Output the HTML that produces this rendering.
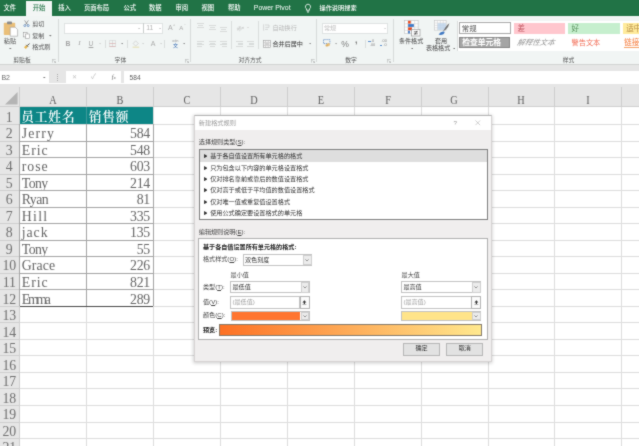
<!DOCTYPE html>
<html><head><meta charset="utf-8"><title>Excel</title>
<style>
html,body{margin:0;padding:0;background:#fff}
body{width:639px;height:446px;overflow:hidden;position:relative;font-family:'Liberation Sans','Noto Sans CJK SC',sans-serif}
#app{position:absolute;left:0;top:0;width:639px;height:446px;overflow:hidden}
#app div,#app span,#app svg{position:absolute;display:block}
#app span{white-space:nowrap}
#app u{text-decoration:underline;text-underline-offset:0.5px;text-decoration-thickness:0.5px}
#in{left:0;top:0;width:639px;height:446px;overflow:hidden;background:#fff;filter:url(#soft)}
</style></head><body>
<svg width="0" height="0" style="position:absolute"><filter id="soft" x="0" y="0" width="100%" height="100%" color-interpolation-filters="sRGB"><feConvolveMatrix order="3" kernelMatrix="1 3 1 3 20 3 1 3 1" divisor="36" edgeMode="duplicate" preserveAlpha="true"/></filter></svg>
<div id="app"><div id="in">
<div style="left:-6.00px;top:-6.00px;width:651.00px;height:21.60px;background:#217346"></div>
<div style="left:26.40px;top:1.20px;width:25.40px;height:14.60px;background:#f3f6f5"></div>
<span style="left:-90.20px;width:200px;text-align:center;top:4.29px;font-size:6.3px;line-height:8.82px;color:#fff;font-weight:500">文件</span>
<span style="left:-61.00px;width:200px;text-align:center;top:4.29px;font-size:6.3px;line-height:8.82px;color:#217346;font-weight:500">开始</span>
<span style="left:-35.50px;width:200px;text-align:center;top:4.29px;font-size:6.3px;line-height:8.82px;color:#fff;font-weight:500">插入</span>
<span style="left:-3.50px;width:200px;text-align:center;top:4.29px;font-size:6.3px;line-height:8.82px;color:#fff;font-weight:500">页面布局</span>
<span style="left:29.80px;width:200px;text-align:center;top:4.29px;font-size:6.3px;line-height:8.82px;color:#fff;font-weight:500">公式</span>
<span style="left:55.30px;width:200px;text-align:center;top:4.29px;font-size:6.3px;line-height:8.82px;color:#fff;font-weight:500">数据</span>
<span style="left:81.80px;width:200px;text-align:center;top:4.29px;font-size:6.3px;line-height:8.82px;color:#fff;font-weight:500">审阅</span>
<span style="left:107.80px;width:200px;text-align:center;top:4.29px;font-size:6.3px;line-height:8.82px;color:#fff;font-weight:500">视图</span>
<span style="left:134.30px;width:200px;text-align:center;top:4.29px;font-size:6.3px;line-height:8.82px;color:#fff;font-weight:500">帮助</span>
<span style="left:172.20px;width:200px;text-align:center;top:3.37px;font-size:6.9px;line-height:9.66px;color:#fff;font-weight:500">Power Pivot</span>
<svg style="left:304px;top:2.5px" width="8" height="11" viewBox="0 0 8 11"><path d="M4 1.2a2.6 2.6 0 0 0-1.5 4.7v1.3h3V5.9A2.6 2.6 0 0 0 4 1.2z" fill="none" stroke="#fff" stroke-width="0.8"/><path d="M2.8 8.2h2.4M3.1 9.2h1.8" stroke="#fff" stroke-width="0.7"/></svg>
<span style="left:319.50px;top:4.36px;font-size:6.2px;line-height:8.68px;color:#fff;font-weight:500">操作说明搜索</span>
<div style="left:-6.00px;top:15.60px;width:651.00px;height:49.00px;background:#f1f5f4"></div>
<div style="left:-6.00px;top:64.50px;width:651.00px;height:6.30px;background:#e6e6e6"></div>
<div style="left:-6.00px;top:64.20px;width:651.00px;height:0.70px;background:#d2d4d3"></div>
<div style="left:58.15px;top:19.00px;width:0.70px;height:43.00px;background:#d6dad9"></div>
<div style="left:189.95px;top:19.00px;width:0.70px;height:43.00px;background:#d6dad9"></div>
<div style="left:316.05px;top:19.00px;width:0.70px;height:43.00px;background:#d6dad9"></div>
<div style="left:393.45px;top:19.00px;width:0.70px;height:43.00px;background:#d6dad9"></div>
<div style="left:231.00px;top:21.00px;width:0.60px;height:28.00px;background:#dadedd"></div>
<div style="left:258.00px;top:21.00px;width:0.60px;height:28.00px;background:#dadedd"></div>
<div style="left:104.70px;top:39.50px;width:0.60px;height:8.50px;background:#dadedd"></div>
<div style="left:127.20px;top:39.50px;width:0.60px;height:8.50px;background:#dadedd"></div>
<div style="left:164.30px;top:39.50px;width:0.60px;height:8.50px;background:#dadedd"></div>
<div style="left:364.50px;top:39.50px;width:0.60px;height:8.50px;background:#dadedd"></div>
<span style="left:-78.00px;width:200px;text-align:center;top:55.84px;font-size:5.8px;line-height:8.12px;color:#555;">剪贴板</span>
<span style="left:20.40px;width:200px;text-align:center;top:55.84px;font-size:5.8px;line-height:8.12px;color:#555;">字体</span>
<span style="left:150.00px;width:200px;text-align:center;top:55.84px;font-size:5.8px;line-height:8.12px;color:#555;">对齐方式</span>
<span style="left:251.00px;width:200px;text-align:center;top:55.84px;font-size:5.8px;line-height:8.12px;color:#555;">数字</span>
<span style="left:468.50px;width:200px;text-align:center;top:55.84px;font-size:5.8px;line-height:8.12px;color:#555;">样式</span>
<svg style="left:52.2px;top:58.6px" width="4" height="4" viewBox="0 0 4 4"><path d="M0.3 0.3H0.3V3.7M0.3 0.3H3.7M1.6 1.6L3.5 3.5M3.6 2.2V3.6H2.2" fill="none" stroke="#999" stroke-width="0.5"/></svg>
<svg style="left:184.7px;top:58.6px" width="4" height="4" viewBox="0 0 4 4"><path d="M0.3 0.3H0.3V3.7M0.3 0.3H3.7M1.6 1.6L3.5 3.5M3.6 2.2V3.6H2.2" fill="none" stroke="#999" stroke-width="0.5"/></svg>
<svg style="left:311.0px;top:58.6px" width="4" height="4" viewBox="0 0 4 4"><path d="M0.3 0.3H0.3V3.7M0.3 0.3H3.7M1.6 1.6L3.5 3.5M3.6 2.2V3.6H2.2" fill="none" stroke="#999" stroke-width="0.5"/></svg>
<svg style="left:387.3px;top:58.6px" width="4" height="4" viewBox="0 0 4 4"><path d="M0.3 0.3H0.3V3.7M0.3 0.3H3.7M1.6 1.6L3.5 3.5M3.6 2.2V3.6H2.2" fill="none" stroke="#999" stroke-width="0.5"/></svg>
<svg style="left:3px;top:20.5px" width="16" height="16" viewBox="0 0 16 16"><rect x="0.8" y="1.8" width="11.4" height="12.2" rx="0.8" fill="#eabf78"/><rect x="4" y="0.6" width="5" height="2.6" rx="0.8" fill="#8a8a8a"/><path d="M7.2 6.2h5l2.4 2.4v6.6H7.2z" fill="#fff" stroke="#9a9a9a" stroke-width="0.6"/></svg>
<span style="left:-90.10px;width:200px;text-align:center;top:36.93px;font-size:6.1px;line-height:8.54px;color:#555;">粘贴</span>
<svg style="left:9.40px;top:47.95px" width="2.6" height="1.50" viewBox="0 0 4 2.2"><path d="M0 0h4L2 2.2z" fill="#777"/></svg>
<svg style="left:23.2px;top:20px" width="7" height="7" viewBox="0 0 7 7"><path d="M1.6 0.4L4.6 4.8M5.4 0.4L2.4 4.8" stroke="#666" stroke-width="0.6" fill="none"/><circle cx="1.8" cy="5.6" r="1" fill="none" stroke="#3b6fb5" stroke-width="0.6"/><circle cx="5.2" cy="5.6" r="1" fill="none" stroke="#3b6fb5" stroke-width="0.6"/></svg>
<svg style="left:23.2px;top:32.2px" width="7" height="7" viewBox="0 0 7 7"><rect x="0.5" y="0.5" width="3.6" height="4.4" fill="#fff" stroke="#888" stroke-width="0.5"/><rect x="2.6" y="2" width="3.8" height="4.5" fill="#fff" stroke="#888" stroke-width="0.5"/></svg>
<svg style="left:23px;top:43.4px" width="8" height="7" viewBox="0 0 8 7"><path d="M4.2 2.6L6.6 0.6" stroke="#555" stroke-width="1"/><path d="M1 4.2L3.4 2l1.6 1.6L2.8 6z" fill="#e8b54d"/><path d="M3.2 1.8l2 2" stroke="#555" stroke-width="0.8"/></svg>
<span style="left:32.20px;top:19.63px;font-size:6.1px;line-height:8.54px;color:#555;">剪切</span>
<span style="left:32.20px;top:31.53px;font-size:6.1px;line-height:8.54px;color:#555;">复制</span>
<span style="left:32.20px;top:42.83px;font-size:6.1px;line-height:8.54px;color:#555;">格式刷</span>
<svg style="left:49.30px;top:35.35px" width="2.6" height="1.50" viewBox="0 0 4 2.2"><path d="M0 0h4L2 2.2z" fill="#777"/></svg>
<div style="left:63.80px;top:22.80px;width:99.60px;height:10.80px;background:#fff;border:0.5px solid #dfe3e2;box-sizing:border-box"></div>
<div style="left:142.80px;top:23.00px;width:0.70px;height:10.40px;background:#c9cdcc"></div>
<svg style="left:138.40px;top:27.75px" width="2.2" height="1.30" viewBox="0 0 4 2.2"><path d="M0 0h4L2 2.2z" fill="#bbb"/></svg>
<svg style="left:159.10px;top:27.75px" width="2.2" height="1.30" viewBox="0 0 4 2.2"><path d="M0 0h4L2 2.2z" fill="#bbb"/></svg>
<span style="left:146.20px;top:23.44px;font-size:6.8px;line-height:9.52px;color:#b4b4b4;">11</span>
<span style="left:70.40px;width:200px;text-align:center;top:23.30px;font-size:7px;line-height:9.8px;color:#aaa;">A</span>
<span style="left:74.30px;width:200px;text-align:center;top:23.00px;font-size:4px;line-height:5.6px;color:#aaa;">^</span>
<span style="left:81.30px;width:200px;text-align:center;top:24.40px;font-size:6px;line-height:8.4px;color:#aaa;">A</span>
<span style="left:84.80px;width:200px;text-align:center;top:23.00px;font-size:4px;line-height:5.6px;color:#aaa;">ˇ</span>
<span style="left:-32.00px;width:200px;text-align:center;top:38.94px;font-size:6.8px;line-height:9.52px;color:#a4a4a4;font-weight:bold">B</span>
<span style="left:-20.60px;width:200px;text-align:center;top:38.80px;font-size:7px;line-height:9.8px;color:#a4a4a4;font-style:italic;font-family:'Liberation Serif',serif">I</span>
<span style="left:-9.00px;width:200px;text-align:center;top:38.88px;font-size:6.6px;line-height:9.24px;color:#a4a4a4;text-decoration:underline">U</span>
<svg style="left:98.90px;top:43.25px" width="2.2" height="1.30" viewBox="0 0 4 2.2"><path d="M0 0h4L2 2.2z" fill="#ccc"/></svg>
<svg style="left:109.4px;top:40.2px" width="7" height="7" viewBox="0 0 7 7"><path d="M0.4 0.4h6.2v6.2H0.4zM3.5 0.4v6.2" fill="none" stroke="#c9c9c9" stroke-width="0.5"/><path d="M0.4 3.5h6.2M0.4 6.6h6.2" stroke="#d9a3a3" stroke-width="0.6"/></svg>
<svg style="left:120.50px;top:43.20px" width="2.4" height="1.40" viewBox="0 0 4 2.2"><path d="M0 0h4L2 2.2z" fill="#888"/></svg>
<svg style="left:132px;top:39.8px" width="8" height="8" viewBox="0 0 8 8"><path d="M3.6 0.8L6.4 3.6 3.6 6 1.2 3.6z" fill="none" stroke="#c4c4c4" stroke-width="0.6"/><rect x="0.6" y="6.6" width="6.6" height="1.2" fill="#e6e2b8"/></svg>
<svg style="left:142.40px;top:43.25px" width="2.2" height="1.30" viewBox="0 0 4 2.2"><path d="M0 0h4L2 2.2z" fill="#ccc"/></svg>
<span style="left:53.20px;width:200px;text-align:center;top:38.60px;font-size:7px;line-height:9.8px;color:#aaa;">A</span>
<svg style="left:160.40px;top:43.25px" width="2.2" height="1.30" viewBox="0 0 4 2.2"><path d="M0 0h4L2 2.2z" fill="#ccc"/></svg>
<span style="left:75.40px;width:200px;text-align:center;top:38.82px;font-size:3.4px;line-height:4.76px;color:#999;">wén</span>
<span style="left:75.40px;width:200px;text-align:center;top:42.10px;font-size:5px;line-height:7.0px;color:#3b6fb5;">文</span>
<svg style="left:182.50px;top:43.20px" width="2.4" height="1.40" viewBox="0 0 4 2.2"><path d="M0 0h4L2 2.2z" fill="#888"/></svg>
<div style="left:197.10px;top:23.30px;width:7.20px;height:0.60px;background:#d8dbda"></div>
<div style="left:198.30px;top:24.90px;width:4.80px;height:0.60px;background:#d8dbda"></div>
<div style="left:197.10px;top:26.50px;width:7.20px;height:0.60px;background:#d8dbda"></div>
<div style="left:208.60px;top:25.30px;width:7.20px;height:0.60px;background:#d8dbda"></div>
<div style="left:209.80px;top:26.90px;width:4.80px;height:0.60px;background:#d8dbda"></div>
<div style="left:208.60px;top:28.50px;width:7.20px;height:0.60px;background:#d8dbda"></div>
<div style="left:219.80px;top:27.30px;width:7.20px;height:0.60px;background:#d8dbda"></div>
<div style="left:221.00px;top:28.90px;width:4.80px;height:0.60px;background:#d8dbda"></div>
<div style="left:219.80px;top:30.50px;width:7.20px;height:0.60px;background:#d8dbda"></div>
<div style="left:197.10px;top:40.90px;width:7.20px;height:0.60px;background:#d8dbda"></div>
<div style="left:197.10px;top:42.50px;width:5.00px;height:0.60px;background:#d8dbda"></div>
<div style="left:197.10px;top:44.10px;width:7.20px;height:0.60px;background:#d8dbda"></div>
<div style="left:197.10px;top:45.70px;width:5.00px;height:0.60px;background:#d8dbda"></div>
<div style="left:208.60px;top:40.90px;width:7.20px;height:0.60px;background:#d8dbda"></div>
<div style="left:209.70px;top:42.50px;width:5.00px;height:0.60px;background:#d8dbda"></div>
<div style="left:208.60px;top:44.10px;width:7.20px;height:0.60px;background:#d8dbda"></div>
<div style="left:209.70px;top:45.70px;width:5.00px;height:0.60px;background:#d8dbda"></div>
<div style="left:219.80px;top:40.90px;width:7.20px;height:0.60px;background:#d8dbda"></div>
<div style="left:222.00px;top:42.50px;width:5.00px;height:0.60px;background:#d8dbda"></div>
<div style="left:219.80px;top:44.10px;width:7.20px;height:0.60px;background:#d8dbda"></div>
<div style="left:222.00px;top:45.70px;width:5.00px;height:0.60px;background:#d8dbda"></div>
<svg style="left:235.5px;top:23.5px" width="10" height="8" viewBox="0 0 10 8"><text x="0.3" y="5.6" font-size="4.6" font-style="italic" fill="#bdbdbd" transform="rotate(-25 3 4)" font-family="Liberation Sans,sans-serif">ab</text><path d="M3 7.2L7.4 3.4M7.4 3.4L5.8 3.6M7.4 3.4L7.2 5" stroke="#bdbdbd" stroke-width="0.5" fill="none"/></svg>
<svg style="left:246.50px;top:27.10px" width="2" height="1.20" viewBox="0 0 4 2.2"><path d="M0 0h4L2 2.2z" fill="#ccc"/></svg>
<div style="left:235.80px;top:40.90px;width:7.20px;height:0.60px;background:#d8dbda"></div>
<div style="left:238.20px;top:42.50px;width:4.80px;height:0.60px;background:#d8dbda"></div>
<div style="left:238.20px;top:44.10px;width:4.80px;height:0.60px;background:#d8dbda"></div>
<div style="left:235.80px;top:45.70px;width:7.20px;height:0.60px;background:#d8dbda"></div>
<div style="left:247.00px;top:40.90px;width:7.20px;height:0.60px;background:#d8dbda"></div>
<div style="left:249.40px;top:42.50px;width:4.80px;height:0.60px;background:#d8dbda"></div>
<div style="left:249.40px;top:44.10px;width:4.80px;height:0.60px;background:#d8dbda"></div>
<div style="left:247.00px;top:45.70px;width:7.20px;height:0.60px;background:#d8dbda"></div>
<svg style="left:263px;top:24.3px" width="7" height="7" viewBox="0 0 7 7"><path d="M0.6 0.3v6.4M2 1h4v2.4H2.4M2 5.4h3" stroke="#c2c2c2" stroke-width="0.6" fill="none"/></svg>
<span style="left:272.40px;top:23.63px;font-size:6.1px;line-height:8.54px;color:#b8b8b8;">自动换行</span>
<svg style="left:262.6px;top:39.6px" width="8" height="8" viewBox="0 0 8 8"><rect x="0.4" y="0.4" width="7.2" height="7.2" fill="#fff" stroke="#9c9c9c" stroke-width="0.6"/><path d="M0.4 2.4h7.2M0.4 5.6h7.2M2.6 0.4v2M5.2 0.4v2M2.6 5.6v2M5.2 5.6v2" stroke="#a8a8a8" stroke-width="0.5"/><path d="M1.6 4h4.8" stroke="#444" stroke-width="0.5"/></svg>
<span style="left:272.40px;top:39.83px;font-size:6.1px;line-height:8.54px;color:#333;">合并后居中</span>
<svg style="left:308.50px;top:43.20px" width="2.4" height="1.40" viewBox="0 0 4 2.2"><path d="M0 0h4L2 2.2z" fill="#888"/></svg>
<div style="left:321.70px;top:22.80px;width:66.50px;height:10.80px;background:#fff;border:0.5px solid #dfe3e2;box-sizing:border-box"></div>
<span style="left:324.00px;top:23.93px;font-size:6.1px;line-height:8.54px;color:#c0c0c0;">常规</span>
<svg style="left:383.90px;top:27.75px" width="2.2" height="1.30" viewBox="0 0 4 2.2"><path d="M0 0h4L2 2.2z" fill="#ccc"/></svg>
<svg style="left:323px;top:39.4px" width="9" height="8" viewBox="0 0 9 8"><rect x="0.5" y="0.6" width="6.4" height="4" fill="none" stroke="#4a7bbd" stroke-width="0.7" stroke-dasharray="1.2 0.7"/><circle cx="5.4" cy="5.6" r="1.6" fill="#e9bf7a"/><circle cx="3.8" cy="6.4" r="1.2" fill="#dcae62"/></svg>
<svg style="left:334.90px;top:43.25px" width="2.2" height="1.30" viewBox="0 0 4 2.2"><path d="M0 0h4L2 2.2z" fill="#999"/></svg>
<span style="left:245.20px;width:200px;text-align:center;top:37.58px;font-size:8.6px;line-height:12.04px;color:#7a7a7a;">%</span>
<span style="left:256.20px;width:200px;text-align:center;top:34.30px;font-size:9px;line-height:12.6px;color:#777;font-weight:bold">,</span>
<span style="left:272.60px;width:200px;text-align:center;top:38.94px;font-size:3.8px;line-height:5.32px;color:#8a8a8a;">.0</span>
<span style="left:272.60px;width:200px;text-align:center;top:42.94px;font-size:3.8px;line-height:5.32px;color:#8a8a8a;">.00</span>
<div style="left:368.40px;top:41.20px;width:2.20px;height:0.80px;background:#5b8fd0"></div>
<span style="left:284.20px;width:200px;text-align:center;top:38.94px;font-size:3.8px;line-height:5.32px;color:#8a8a8a;">.00</span>
<span style="left:285.00px;width:200px;text-align:center;top:42.94px;font-size:3.8px;line-height:5.32px;color:#8a8a8a;">.0</span>
<div style="left:379.80px;top:45.20px;width:2.20px;height:0.80px;background:#5b8fd0"></div>
<svg style="left:403.6px;top:19.6px" width="17" height="17" viewBox="0 0 17 17"><rect x="0.5" y="0.5" width="13.6" height="13.2" fill="#fff" stroke="#b4b4b4" stroke-width="0.5"/><path d="M3.9 0.5v13.2M7.3 0.5v13.2M10.7 0.5v13.2M0.5 3.8h13.6M0.5 7.1h13.6M0.5 10.4h13.6" stroke="#c4c4c4" stroke-width="0.45"/><rect x="4.1" y="0.8" width="2.6" height="2.8" fill="#e8491f"/><rect x="4.1" y="4.1" width="5.8" height="2.8" fill="#3f79c6"/><rect x="4.1" y="7.4" width="3.8" height="2.8" fill="#e8491f"/><rect x="4.1" y="10.7" width="1.8" height="2.8" fill="#3f79c6"/><rect x="7.6" y="9.4" width="8.4" height="6.6" fill="#fff" stroke="#8a8a8a" stroke-width="0.6"/><path d="M9.8 11.8h4M9.8 13.8h4M13 10.8l-2.2 4" stroke="#333" stroke-width="0.65"/></svg>
<span style="left:311.10px;width:200px;text-align:center;top:36.93px;font-size:6.1px;line-height:8.54px;color:#444;">条件格式</span>
<svg style="left:410.60px;top:47.85px" width="2.6" height="1.50" viewBox="0 0 4 2.2"><path d="M0 0h4L2 2.2z" fill="#777"/></svg>
<svg style="left:434.4px;top:20px" width="16" height="16" viewBox="0 0 16 16"><rect x="0.5" y="0.5" width="11.6" height="9.6" fill="#fff" stroke="#b9b9b9" stroke-width="0.5"/><path d="M0.5 3h11.6M0.5 5.4h11.6M0.5 7.8h11.6M3.4 0.5v9.6M6.3 0.5v9.6M9.2 0.5v9.6" stroke="#c4c4c4" stroke-width="0.45"/><rect x="3.6" y="3.2" width="8.3" height="6.7" fill="#bcd2ea" opacity="0.8"/><path d="M15.4 3.2Q13.6 4 11.4 7.4L9 11.2l2.6-1.4Q14.6 7.4 15.4 3.2z" fill="#6e6e6e"/><path d="M4.6 14.6q2.2-3.6 5.6-3 1.2 1.2-0.8 2.6-2.6 1.2-4.8 0.4z" fill="#3f78c2"/></svg>
<span style="left:341.00px;width:200px;text-align:center;top:36.93px;font-size:6.1px;line-height:8.54px;color:#444;">套用</span>
<span style="left:338.10px;width:200px;text-align:center;top:44.13px;font-size:6.1px;line-height:8.54px;color:#444;">表格格式</span>
<svg style="left:452.60px;top:47.95px" width="2.6" height="1.50" viewBox="0 0 4 2.2"><path d="M0 0h4L2 2.2z" fill="#777"/></svg>
<div style="left:457.40px;top:20.60px;width:190.00px;height:30.20px;background:#fff;border-left:0.5px solid #d9dcdb;box-sizing:border-box"></div>
<div style="left:458.60px;top:21.70px;width:52.80px;height:12.60px;background:#fff;border:0.8px solid #a9a9a9;box-sizing:border-box"></div>
<span style="left:461.80px;top:23.92px;font-size:7.4px;line-height:10.36px;color:#505050;font-weight:400">常规</span>
<div style="left:459.40px;top:36.90px;width:51.00px;height:10.80px;background:#a5a5a5;border:0.7px solid #868686;box-sizing:border-box"></div>
<span style="left:462.20px;top:37.84px;font-size:7.8px;line-height:10.92px;color:#fff;font-weight:bold">检查单元格</span>
<div style="left:514.20px;top:22.90px;width:51.00px;height:10.70px;background:#ffc7ce"></div>
<span style="left:517.50px;top:23.85px;font-size:7.5px;line-height:10.5px;color:#bf525c;font-weight:400">差</span>
<div style="left:568.30px;top:22.90px;width:51.50px;height:10.70px;background:#c6efce"></div>
<span style="left:571.50px;top:23.85px;font-size:7.5px;line-height:10.5px;color:#57905a;font-weight:400">好</span>
<div style="left:623.00px;top:22.90px;width:20.00px;height:10.70px;background:#ffeb9c"></div>
<span style="left:626.20px;top:23.85px;font-size:7.5px;line-height:10.5px;color:#b58c46;font-weight:400">适中</span>
<span style="left:516.80px;top:37.75px;font-size:7.5px;line-height:10.5px;color:#979797;font-style:italic;transform:skewX(-12deg);transform-origin:left center">解释性文本</span>
<span style="left:571.50px;top:37.96px;font-size:7.2px;line-height:10.08px;color:#f26c55;font-weight:400">警告文本</span>
<span style="left:624.30px;top:37.75px;font-size:7.5px;line-height:10.5px;color:#f57a3a;white-space:nowrap">链接单元格</span>
<div style="left:624.30px;top:47.00px;width:20.00px;height:0.80px;background:#f5a26a"></div>
<div style="left:-6.00px;top:70.80px;width:55.00px;height:12.70px;background:#fff"></div>
<div style="left:66.00px;top:70.80px;width:579.00px;height:12.70px;background:#fff"></div>
<div style="left:49.00px;top:70.80px;width:17.00px;height:12.70px;background:#e6e6e6"></div>
<div style="left:57.00px;top:73.60px;width:0.70px;height:0.90px;background:#aaa"></div>
<div style="left:57.00px;top:75.60px;width:0.70px;height:0.90px;background:#aaa"></div>
<div style="left:57.00px;top:77.60px;width:0.70px;height:0.90px;background:#aaa"></div>
<div style="left:57.00px;top:79.60px;width:0.70px;height:0.90px;background:#aaa"></div>
<span style="left:1.40px;top:72.90px;font-size:7px;line-height:9.8px;color:#6a6a6a;">B2</span>
<svg style="left:43.40px;top:76.95px" width="2.6" height="1.50" viewBox="0 0 4 2.2"><path d="M0 0h4L2 2.2z" fill="#777"/></svg>
<span style="left:-25.20px;width:200px;text-align:center;top:73.06px;font-size:6.2px;line-height:8.68px;color:#c4c4c4;">✕</span>
<span style="left:-6.40px;width:200px;text-align:center;top:72.22px;font-size:7.4px;line-height:10.36px;color:#c4c4c4;">✓</span>
<span style="left:12.60px;width:200px;text-align:center;top:73.06px;font-size:6.2px;line-height:8.68px;color:#666;font-style:italic;font-family:'Liberation Serif',serif">f</span>
<span style="left:14.80px;width:200px;text-align:center;top:75.12px;font-size:4.4px;line-height:6.16px;color:#666;font-style:italic;font-family:'Liberation Serif',serif">x</span>
<div style="left:121.30px;top:70.80px;width:2.30px;height:12.70px;background:#e6e6e6"></div>
<span style="left:129.60px;top:72.78px;font-size:6.6px;line-height:9.24px;color:#5a5a5a;">584</span>
<div style="left:-6.00px;top:83.50px;width:651.00px;height:23.50px;background:#e6e6e6"></div>
<div style="left:-6.00px;top:106.30px;width:651.00px;height:0.80px;background:#cfcfcf"></div>
<div style="left:-6.00px;top:107.00px;width:25.60px;height:345.00px;background:#e6e6e6"></div>
<div style="left:19.00px;top:107.00px;width:0.70px;height:345.00px;background:#cfcfcf"></div>
<svg style="left:5px;top:92.2px" width="12.6" height="12.6" viewBox="0 0 10 10"><path d="M10 0V10H0z" fill="#b4b4b4"/></svg>
<div style="left:19.20px;top:86.50px;width:0.80px;height:20.50px;background:#cdcdcd"></div>
<div style="left:86.10px;top:86.50px;width:0.80px;height:20.50px;background:#cdcdcd"></div>
<div style="left:153.00px;top:86.50px;width:0.80px;height:20.50px;background:#cdcdcd"></div>
<div style="left:219.90px;top:86.50px;width:0.80px;height:20.50px;background:#cdcdcd"></div>
<div style="left:286.80px;top:86.50px;width:0.80px;height:20.50px;background:#cdcdcd"></div>
<div style="left:353.70px;top:86.50px;width:0.80px;height:20.50px;background:#cdcdcd"></div>
<div style="left:420.60px;top:86.50px;width:0.80px;height:20.50px;background:#cdcdcd"></div>
<div style="left:487.50px;top:86.50px;width:0.80px;height:20.50px;background:#cdcdcd"></div>
<div style="left:554.40px;top:86.50px;width:0.80px;height:20.50px;background:#cdcdcd"></div>
<div style="left:621.30px;top:86.50px;width:0.80px;height:20.50px;background:#cdcdcd"></div>
<span style="left:-46.95px;width:200px;text-align:center;top:91.70px;font-size:13.2px;line-height:16px;color:#606060;font-family:'Liberation Serif','Noto Serif CJK SC',serif;transform:scaleX(0.78)">A</span>
<span style="left:19.95px;width:200px;text-align:center;top:91.70px;font-size:13.2px;line-height:16px;color:#606060;font-family:'Liberation Serif','Noto Serif CJK SC',serif;transform:scaleX(0.78)">B</span>
<span style="left:86.85px;width:200px;text-align:center;top:91.70px;font-size:13.2px;line-height:16px;color:#606060;font-family:'Liberation Serif','Noto Serif CJK SC',serif;transform:scaleX(0.78)">C</span>
<span style="left:153.75px;width:200px;text-align:center;top:91.70px;font-size:13.2px;line-height:16px;color:#606060;font-family:'Liberation Serif','Noto Serif CJK SC',serif;transform:scaleX(0.78)">D</span>
<span style="left:220.65px;width:200px;text-align:center;top:91.70px;font-size:13.2px;line-height:16px;color:#606060;font-family:'Liberation Serif','Noto Serif CJK SC',serif;transform:scaleX(0.78)">E</span>
<span style="left:287.55px;width:200px;text-align:center;top:91.70px;font-size:13.2px;line-height:16px;color:#606060;font-family:'Liberation Serif','Noto Serif CJK SC',serif;transform:scaleX(0.78)">F</span>
<span style="left:354.45px;width:200px;text-align:center;top:91.70px;font-size:13.2px;line-height:16px;color:#606060;font-family:'Liberation Serif','Noto Serif CJK SC',serif;transform:scaleX(0.78)">G</span>
<span style="left:421.35px;width:200px;text-align:center;top:91.70px;font-size:13.2px;line-height:16px;color:#606060;font-family:'Liberation Serif','Noto Serif CJK SC',serif;transform:scaleX(0.78)">H</span>
<span style="left:488.25px;width:200px;text-align:center;top:91.70px;font-size:13.2px;line-height:16px;color:#606060;font-family:'Liberation Serif','Noto Serif CJK SC',serif;transform:scaleX(0.78)">I</span>
<div style="left:86.10px;top:107.00px;width:0.80px;height:345.00px;background:#dddddd"></div>
<div style="left:153.00px;top:107.00px;width:0.80px;height:345.00px;background:#dddddd"></div>
<div style="left:219.90px;top:107.00px;width:0.80px;height:345.00px;background:#dddddd"></div>
<div style="left:286.80px;top:107.00px;width:0.80px;height:345.00px;background:#dddddd"></div>
<div style="left:353.70px;top:107.00px;width:0.80px;height:345.00px;background:#dddddd"></div>
<div style="left:420.60px;top:107.00px;width:0.80px;height:345.00px;background:#dddddd"></div>
<div style="left:487.50px;top:107.00px;width:0.80px;height:345.00px;background:#dddddd"></div>
<div style="left:554.40px;top:107.00px;width:0.80px;height:345.00px;background:#dddddd"></div>
<div style="left:621.30px;top:107.00px;width:0.80px;height:345.00px;background:#dddddd"></div>
<div style="left:19.60px;top:124.00px;width:625.40px;height:0.80px;background:#dddddd"></div>
<div style="left:-6.00px;top:124.00px;width:25.60px;height:0.80px;background:#cfcfcf"></div>
<span style="left:-90.80px;width:200px;text-align:center;top:109.70px;font-size:13.8px;line-height:16px;color:#707070;font-family:'Liberation Serif','Noto Serif CJK SC',serif;letter-spacing:-0.23px">1</span>
<div style="left:19.60px;top:140.53px;width:625.40px;height:0.80px;background:#dddddd"></div>
<div style="left:-6.00px;top:140.53px;width:25.60px;height:0.80px;background:#cfcfcf"></div>
<span style="left:-90.80px;width:200px;text-align:center;top:126.23px;font-size:13.8px;line-height:16px;color:#707070;font-family:'Liberation Serif','Noto Serif CJK SC',serif;letter-spacing:-0.23px">2</span>
<div style="left:19.60px;top:157.06px;width:625.40px;height:0.80px;background:#dddddd"></div>
<div style="left:-6.00px;top:157.06px;width:25.60px;height:0.80px;background:#cfcfcf"></div>
<span style="left:-90.80px;width:200px;text-align:center;top:142.76px;font-size:13.8px;line-height:16px;color:#707070;font-family:'Liberation Serif','Noto Serif CJK SC',serif;letter-spacing:-0.23px">3</span>
<div style="left:19.60px;top:173.59px;width:625.40px;height:0.80px;background:#dddddd"></div>
<div style="left:-6.00px;top:173.59px;width:25.60px;height:0.80px;background:#cfcfcf"></div>
<span style="left:-90.80px;width:200px;text-align:center;top:159.29px;font-size:13.8px;line-height:16px;color:#707070;font-family:'Liberation Serif','Noto Serif CJK SC',serif;letter-spacing:-0.23px">4</span>
<div style="left:19.60px;top:190.12px;width:625.40px;height:0.80px;background:#dddddd"></div>
<div style="left:-6.00px;top:190.12px;width:25.60px;height:0.80px;background:#cfcfcf"></div>
<span style="left:-90.80px;width:200px;text-align:center;top:175.82px;font-size:13.8px;line-height:16px;color:#707070;font-family:'Liberation Serif','Noto Serif CJK SC',serif;letter-spacing:-0.23px">5</span>
<div style="left:19.60px;top:206.65px;width:625.40px;height:0.80px;background:#dddddd"></div>
<div style="left:-6.00px;top:206.65px;width:25.60px;height:0.80px;background:#cfcfcf"></div>
<span style="left:-90.80px;width:200px;text-align:center;top:192.35px;font-size:13.8px;line-height:16px;color:#707070;font-family:'Liberation Serif','Noto Serif CJK SC',serif;letter-spacing:-0.23px">6</span>
<div style="left:19.60px;top:223.18px;width:625.40px;height:0.80px;background:#dddddd"></div>
<div style="left:-6.00px;top:223.18px;width:25.60px;height:0.80px;background:#cfcfcf"></div>
<span style="left:-90.80px;width:200px;text-align:center;top:208.88px;font-size:13.8px;line-height:16px;color:#707070;font-family:'Liberation Serif','Noto Serif CJK SC',serif;letter-spacing:-0.23px">7</span>
<div style="left:19.60px;top:239.71px;width:625.40px;height:0.80px;background:#dddddd"></div>
<div style="left:-6.00px;top:239.71px;width:25.60px;height:0.80px;background:#cfcfcf"></div>
<span style="left:-90.80px;width:200px;text-align:center;top:225.41px;font-size:13.8px;line-height:16px;color:#707070;font-family:'Liberation Serif','Noto Serif CJK SC',serif;letter-spacing:-0.23px">8</span>
<div style="left:19.60px;top:256.24px;width:625.40px;height:0.80px;background:#dddddd"></div>
<div style="left:-6.00px;top:256.24px;width:25.60px;height:0.80px;background:#cfcfcf"></div>
<span style="left:-90.80px;width:200px;text-align:center;top:241.94px;font-size:13.8px;line-height:16px;color:#707070;font-family:'Liberation Serif','Noto Serif CJK SC',serif;letter-spacing:-0.23px">9</span>
<div style="left:19.60px;top:272.77px;width:625.40px;height:0.80px;background:#dddddd"></div>
<div style="left:-6.00px;top:272.77px;width:25.60px;height:0.80px;background:#cfcfcf"></div>
<span style="left:-90.80px;width:200px;text-align:center;top:258.47px;font-size:13.8px;line-height:16px;color:#707070;font-family:'Liberation Serif','Noto Serif CJK SC',serif;letter-spacing:-0.23px">10</span>
<div style="left:19.60px;top:289.30px;width:625.40px;height:0.80px;background:#dddddd"></div>
<div style="left:-6.00px;top:289.30px;width:25.60px;height:0.80px;background:#cfcfcf"></div>
<span style="left:-90.80px;width:200px;text-align:center;top:275.00px;font-size:13.8px;line-height:16px;color:#707070;font-family:'Liberation Serif','Noto Serif CJK SC',serif;letter-spacing:-0.23px">11</span>
<div style="left:19.60px;top:305.83px;width:625.40px;height:0.80px;background:#dddddd"></div>
<div style="left:-6.00px;top:305.83px;width:25.60px;height:0.80px;background:#cfcfcf"></div>
<span style="left:-90.80px;width:200px;text-align:center;top:291.53px;font-size:13.8px;line-height:16px;color:#707070;font-family:'Liberation Serif','Noto Serif CJK SC',serif;letter-spacing:-0.23px">12</span>
<div style="left:19.60px;top:322.36px;width:625.40px;height:0.80px;background:#dddddd"></div>
<div style="left:-6.00px;top:322.36px;width:25.60px;height:0.80px;background:#cfcfcf"></div>
<span style="left:-90.80px;width:200px;text-align:center;top:308.06px;font-size:13.8px;line-height:16px;color:#707070;font-family:'Liberation Serif','Noto Serif CJK SC',serif;letter-spacing:-0.23px">13</span>
<div style="left:19.60px;top:338.89px;width:625.40px;height:0.80px;background:#dddddd"></div>
<div style="left:-6.00px;top:338.89px;width:25.60px;height:0.80px;background:#cfcfcf"></div>
<span style="left:-90.80px;width:200px;text-align:center;top:324.59px;font-size:13.8px;line-height:16px;color:#707070;font-family:'Liberation Serif','Noto Serif CJK SC',serif;letter-spacing:-0.23px">14</span>
<div style="left:19.60px;top:355.42px;width:625.40px;height:0.80px;background:#dddddd"></div>
<div style="left:-6.00px;top:355.42px;width:25.60px;height:0.80px;background:#cfcfcf"></div>
<span style="left:-90.80px;width:200px;text-align:center;top:341.12px;font-size:13.8px;line-height:16px;color:#707070;font-family:'Liberation Serif','Noto Serif CJK SC',serif;letter-spacing:-0.23px">15</span>
<div style="left:19.60px;top:371.95px;width:625.40px;height:0.80px;background:#dddddd"></div>
<div style="left:-6.00px;top:371.95px;width:25.60px;height:0.80px;background:#cfcfcf"></div>
<span style="left:-90.80px;width:200px;text-align:center;top:357.65px;font-size:13.8px;line-height:16px;color:#707070;font-family:'Liberation Serif','Noto Serif CJK SC',serif;letter-spacing:-0.23px">16</span>
<div style="left:19.60px;top:388.48px;width:625.40px;height:0.80px;background:#dddddd"></div>
<div style="left:-6.00px;top:388.48px;width:25.60px;height:0.80px;background:#cfcfcf"></div>
<span style="left:-90.80px;width:200px;text-align:center;top:374.18px;font-size:13.8px;line-height:16px;color:#707070;font-family:'Liberation Serif','Noto Serif CJK SC',serif;letter-spacing:-0.23px">17</span>
<div style="left:19.60px;top:405.01px;width:625.40px;height:0.80px;background:#dddddd"></div>
<div style="left:-6.00px;top:405.01px;width:25.60px;height:0.80px;background:#cfcfcf"></div>
<span style="left:-90.80px;width:200px;text-align:center;top:390.71px;font-size:13.8px;line-height:16px;color:#707070;font-family:'Liberation Serif','Noto Serif CJK SC',serif;letter-spacing:-0.23px">18</span>
<div style="left:19.60px;top:421.54px;width:625.40px;height:0.80px;background:#dddddd"></div>
<div style="left:-6.00px;top:421.54px;width:25.60px;height:0.80px;background:#cfcfcf"></div>
<span style="left:-90.80px;width:200px;text-align:center;top:407.24px;font-size:13.8px;line-height:16px;color:#707070;font-family:'Liberation Serif','Noto Serif CJK SC',serif;letter-spacing:-0.23px">19</span>
<div style="left:19.60px;top:438.07px;width:625.40px;height:0.80px;background:#dddddd"></div>
<div style="left:-6.00px;top:438.07px;width:25.60px;height:0.80px;background:#cfcfcf"></div>
<span style="left:-90.80px;width:200px;text-align:center;top:423.77px;font-size:13.8px;line-height:16px;color:#707070;font-family:'Liberation Serif','Noto Serif CJK SC',serif;letter-spacing:-0.23px">20</span>
<div style="left:19.60px;top:454.60px;width:625.40px;height:0.80px;background:#dddddd"></div>
<div style="left:-6.00px;top:454.60px;width:25.60px;height:0.80px;background:#cfcfcf"></div>
<span style="left:-90.80px;width:200px;text-align:center;top:440.30px;font-size:13.8px;line-height:16px;color:#707070;font-family:'Liberation Serif','Noto Serif CJK SC',serif;letter-spacing:-0.23px">21</span>
<div style="left:19.80px;top:107.20px;width:133.60px;height:17.00px;background:#0d8686"></div>
<div style="left:86.10px;top:107.20px;width:0.80px;height:17.20px;background:#3d9a9a"></div>
<span style="left:21.20px;top:109.30px;font-size:12.7px;line-height:16px;color:#fff;font-family:'Liberation Serif','Noto Serif CJK SC',serif;font-weight:600;letter-spacing:0.9px">员工姓名</span>
<span style="left:88.70px;top:109.30px;font-size:12.7px;line-height:16px;color:#fff;font-family:'Liberation Serif','Noto Serif CJK SC',serif;font-weight:600;letter-spacing:0.9px">销售额</span>
<span style="left:21.80px;top:126.23px;font-size:13.8px;line-height:16px;color:#666;font-family:'Liberation Serif','Noto Serif CJK SC',serif;letter-spacing:1.15px">Jerry</span>
<span style="right:489.03px;top:126.23px;font-size:13.8px;line-height:16px;color:#666;font-family:'Liberation Serif','Noto Serif CJK SC',serif;letter-spacing:-0.23px">584</span>
<div style="left:19.60px;top:140.53px;width:133.80px;height:0.80px;background:#a4a4a4"></div>
<span style="left:21.80px;top:142.76px;font-size:13.8px;line-height:16px;color:#666;font-family:'Liberation Serif','Noto Serif CJK SC',serif;letter-spacing:0.92px">Eric</span>
<span style="right:489.03px;top:142.76px;font-size:13.8px;line-height:16px;color:#666;font-family:'Liberation Serif','Noto Serif CJK SC',serif;letter-spacing:-0.23px">548</span>
<div style="left:19.60px;top:157.06px;width:133.80px;height:0.80px;background:#a4a4a4"></div>
<span style="left:21.80px;top:159.29px;font-size:13.8px;line-height:16px;color:#666;font-family:'Liberation Serif','Noto Serif CJK SC',serif;letter-spacing:0.92px">rose</span>
<span style="right:489.03px;top:159.29px;font-size:13.8px;line-height:16px;color:#666;font-family:'Liberation Serif','Noto Serif CJK SC',serif;letter-spacing:-0.23px">603</span>
<div style="left:19.60px;top:173.59px;width:133.80px;height:0.80px;background:#a4a4a4"></div>
<span style="left:21.80px;top:175.82px;font-size:13.8px;line-height:16px;color:#666;font-family:'Liberation Serif','Noto Serif CJK SC',serif;letter-spacing:-0.61px">Tony</span>
<span style="right:489.03px;top:175.82px;font-size:13.8px;line-height:16px;color:#666;font-family:'Liberation Serif','Noto Serif CJK SC',serif;letter-spacing:-0.23px">214</span>
<div style="left:19.60px;top:190.12px;width:133.80px;height:0.80px;background:#a4a4a4"></div>
<span style="left:21.80px;top:192.35px;font-size:13.8px;line-height:16px;color:#666;font-family:'Liberation Serif','Noto Serif CJK SC',serif;letter-spacing:-0.61px">Ryan</span>
<span style="right:489.03px;top:192.35px;font-size:13.8px;line-height:16px;color:#666;font-family:'Liberation Serif','Noto Serif CJK SC',serif;letter-spacing:-0.23px">81</span>
<div style="left:19.60px;top:206.65px;width:133.80px;height:0.80px;background:#a4a4a4"></div>
<span style="left:21.80px;top:208.88px;font-size:13.8px;line-height:16px;color:#666;font-family:'Liberation Serif','Noto Serif CJK SC',serif;letter-spacing:1.3px">Hill</span>
<span style="right:489.03px;top:208.88px;font-size:13.8px;line-height:16px;color:#666;font-family:'Liberation Serif','Noto Serif CJK SC',serif;letter-spacing:-0.23px">335</span>
<div style="left:19.60px;top:223.18px;width:133.80px;height:0.80px;background:#a4a4a4"></div>
<span style="left:21.80px;top:225.41px;font-size:13.8px;line-height:16px;color:#666;font-family:'Liberation Serif','Noto Serif CJK SC',serif;letter-spacing:0.92px">jack</span>
<span style="right:489.03px;top:225.41px;font-size:13.8px;line-height:16px;color:#666;font-family:'Liberation Serif','Noto Serif CJK SC',serif;letter-spacing:-0.23px">135</span>
<div style="left:19.60px;top:239.71px;width:133.80px;height:0.80px;background:#a4a4a4"></div>
<span style="left:21.80px;top:241.94px;font-size:13.8px;line-height:16px;color:#666;font-family:'Liberation Serif','Noto Serif CJK SC',serif;letter-spacing:-0.61px">Tony</span>
<span style="right:489.03px;top:241.94px;font-size:13.8px;line-height:16px;color:#666;font-family:'Liberation Serif','Noto Serif CJK SC',serif;letter-spacing:-0.23px">55</span>
<div style="left:19.60px;top:256.24px;width:133.80px;height:0.80px;background:#a4a4a4"></div>
<span style="left:21.80px;top:258.47px;font-size:13.8px;line-height:16px;color:#666;font-family:'Liberation Serif','Noto Serif CJK SC',serif;letter-spacing:0.08px">Grace</span>
<span style="right:489.03px;top:258.47px;font-size:13.8px;line-height:16px;color:#666;font-family:'Liberation Serif','Noto Serif CJK SC',serif;letter-spacing:-0.23px">226</span>
<div style="left:19.60px;top:272.77px;width:133.80px;height:0.80px;background:#a4a4a4"></div>
<span style="left:21.80px;top:275.00px;font-size:13.8px;line-height:16px;color:#666;font-family:'Liberation Serif','Noto Serif CJK SC',serif;letter-spacing:0.92px">Eric</span>
<span style="right:489.03px;top:275.00px;font-size:13.8px;line-height:16px;color:#666;font-family:'Liberation Serif','Noto Serif CJK SC',serif;letter-spacing:-0.23px">821</span>
<div style="left:19.60px;top:289.30px;width:133.80px;height:0.80px;background:#a4a4a4"></div>
<span style="left:21.80px;top:291.53px;font-size:13.8px;line-height:16px;color:#666;font-family:'Liberation Serif','Noto Serif CJK SC',serif;letter-spacing:-2.34px">Emma</span>
<span style="right:489.03px;top:291.53px;font-size:13.8px;line-height:16px;color:#666;font-family:'Liberation Serif','Noto Serif CJK SC',serif;letter-spacing:-0.23px">289</span>
<div style="left:19.60px;top:305.83px;width:133.80px;height:1.20px;background:#484848"></div>
<div style="left:19.30px;top:124.40px;width:0.80px;height:181.83px;background:#a4a4a4"></div>
<div style="left:86.10px;top:124.40px;width:0.80px;height:181.83px;background:#a4a4a4"></div>
<div style="left:153.00px;top:124.40px;width:0.80px;height:181.83px;background:#a4a4a4"></div>
<div style="left:194.0px;top:115.0px;width:297.5px;height:246.60000000000002px;background:#f0eeee;box-shadow:0.3px 0.8px 3.5px 1px rgba(0,0,0,0.2);border:0.5px solid #d6d3d3;border-top-color:#b4b4b4;box-sizing:border-box"></div>
<div style="left:194.50px;top:115.50px;width:296.50px;height:14.50px;background:#fff"></div>
<span style="left:198.80px;top:118.86px;font-size:6.2px;line-height:8.68px;color:#9a9a9a;">新建格式规则</span>
<span style="left:355.30px;width:200px;text-align:center;top:118.86px;font-size:6.2px;line-height:8.68px;color:#999;">?</span>
<svg style="left:475.4px;top:120.4px" width="5.6" height="5.6" viewBox="0 0 6 6"><path d="M0.5 0.5L5.5 5.5M5.5 0.5L0.5 5.5" stroke="#aaa" stroke-width="0.6"/></svg>
<span style="left:198.80px;top:138.13px;font-size:6.1px;line-height:8.54px;color:#444;">选择规则类型(<u>S</u>):</span>
<div style="left:198.70px;top:149.00px;width:289.30px;height:71.00px;background:#fff;border:0.8px solid #7f7f7f;box-sizing:border-box"></div>
<div style="left:199.60px;top:150.00px;width:287.60px;height:12.00px;background:#dedede"></div>
<svg style="left:203.6px;top:154.30px" width="3.8" height="4.2" viewBox="0 0 3 3.4"><path d="M0 0L3 1.7 0 3.4z" fill="#333"/></svg>
<span style="left:210.20px;top:152.00px;font-size:6.15px;line-height:8.61px;color:#333;">基于各自值设置所有单元格的格式</span>
<svg style="left:203.6px;top:165.68px" width="3.8" height="4.2" viewBox="0 0 3 3.4"><path d="M0 0L3 1.7 0 3.4z" fill="#333"/></svg>
<span style="left:210.20px;top:163.88px;font-size:6.15px;line-height:8.61px;color:#333;">只为包含以下内容的单元格设置格式</span>
<svg style="left:203.6px;top:177.06px" width="3.8" height="4.2" viewBox="0 0 3 3.4"><path d="M0 0L3 1.7 0 3.4z" fill="#333"/></svg>
<span style="left:210.20px;top:174.75px;font-size:6.15px;line-height:8.61px;color:#333;">仅对排名靠前或靠后的数值设置格式</span>
<svg style="left:203.6px;top:188.44px" width="3.8" height="4.2" viewBox="0 0 3 3.4"><path d="M0 0L3 1.7 0 3.4z" fill="#333"/></svg>
<span style="left:210.20px;top:186.13px;font-size:6.15px;line-height:8.61px;color:#333;">仅对高于或低于平均值的数值设置格式</span>
<svg style="left:203.6px;top:199.82px" width="3.8" height="4.2" viewBox="0 0 3 3.4"><path d="M0 0L3 1.7 0 3.4z" fill="#333"/></svg>
<span style="left:210.20px;top:197.52px;font-size:6.15px;line-height:8.61px;color:#333;">仅对唯一值或重复值设置格式</span>
<svg style="left:203.6px;top:211.20px" width="3.8" height="4.2" viewBox="0 0 3 3.4"><path d="M0 0L3 1.7 0 3.4z" fill="#333"/></svg>
<span style="left:210.20px;top:208.90px;font-size:6.15px;line-height:8.61px;color:#333;">使用公式确定要设置格式的单元格</span>
<span style="left:198.80px;top:227.93px;font-size:6.1px;line-height:8.54px;color:#444;">编辑规则说明(<u>E</u>):</span>
<div style="left:197.60px;top:238.00px;width:290.40px;height:102.40px;background:#fff;border:0.7px solid #b0b0b0;box-sizing:border-box"></div>
<span style="left:203.00px;top:243.33px;font-size:6.1px;line-height:8.54px;color:#222;font-weight:bold">基于各自值设置所有单元格的格式:</span>
<span style="left:203.00px;top:254.73px;font-size:6.1px;line-height:8.54px;color:#444;">格式样式(<u>O</u>):</span>
<div style="left:242.80px;top:253.80px;width:69.60px;height:12.50px;background:#fff;border:0.7px solid #c2c2c2;box-sizing:border-box"></div>
<div style="left:303.10px;top:254.70px;width:8.50px;height:10.70px;background:#ececec;border:0.5px solid #cfcfcf;box-sizing:border-box"></div>
<svg style="left:305.40px;top:258.85px" width="4" height="2.6" viewBox="0 0 4 2.6"><path d="M0.4 0.4L2 2 3.6 0.4" fill="none" stroke="#555" stroke-width="0.6"/></svg>
<span style="left:245.00px;top:255.78px;font-size:6.1px;line-height:8.54px;color:#333;">双色刻度</span>
<span style="left:230.60px;top:270.53px;font-size:6.1px;line-height:8.54px;color:#444;">最小值</span>
<span style="left:401.60px;top:270.53px;font-size:6.1px;line-height:8.54px;color:#444;">最大值</span>
<span style="left:203.00px;top:283.13px;font-size:6.1px;line-height:8.54px;color:#444;">类型(<u>T</u>):</span>
<div style="left:230.30px;top:280.80px;width:79.60px;height:12.70px;background:#fff;border:0.7px solid #c2c2c2;box-sizing:border-box"></div>
<div style="left:300.60px;top:281.70px;width:8.50px;height:10.90px;background:#ececec;border:0.5px solid #cfcfcf;box-sizing:border-box"></div>
<svg style="left:302.90px;top:285.95px" width="4" height="2.6" viewBox="0 0 4 2.6"><path d="M0.4 0.4L2 2 3.6 0.4" fill="none" stroke="#555" stroke-width="0.6"/></svg>
<span style="left:232.50px;top:282.88px;font-size:6.1px;line-height:8.54px;color:#333;">最低值</span>
<div style="left:401.20px;top:280.80px;width:80.20px;height:12.70px;background:#fff;border:0.7px solid #c2c2c2;box-sizing:border-box"></div>
<div style="left:472.10px;top:281.70px;width:8.50px;height:10.90px;background:#ececec;border:0.5px solid #cfcfcf;box-sizing:border-box"></div>
<svg style="left:474.40px;top:285.95px" width="4" height="2.6" viewBox="0 0 4 2.6"><path d="M0.4 0.4L2 2 3.6 0.4" fill="none" stroke="#555" stroke-width="0.6"/></svg>
<span style="left:403.40px;top:282.88px;font-size:6.1px;line-height:8.54px;color:#333;">最高值</span>
<span style="left:203.00px;top:297.73px;font-size:6.1px;line-height:8.54px;color:#444;">值(<u>V</u>):</span>
<div style="left:230.30px;top:296.20px;width:70.00px;height:12.60px;background:#fff;border:0.7px solid #c2c2c2;box-sizing:border-box"></div>
<div style="left:299.70px;top:296.20px;width:10.20px;height:12.60px;background:#fbfbfb;border:0.7px solid #b4b4b4;box-sizing:border-box"></div>
<svg style="left:302.40px;top:299.70px" width="4.8" height="5.6" viewBox="0 0 4.8 5.6"><path d="M2.4 0.2L4.4 2.6H3V4H1.8V2.6H0.4z" fill="#333"/><path d="M0.4 5h4" stroke="#333" stroke-width="0.7"/></svg>
<span style="left:232.50px;top:298.23px;font-size:6.1px;line-height:8.54px;color:#a0a0a0;">(最低值)</span>
<div style="left:401.20px;top:296.20px;width:70.60px;height:12.60px;background:#fff;border:0.7px solid #c2c2c2;box-sizing:border-box"></div>
<div style="left:471.20px;top:296.20px;width:10.20px;height:12.60px;background:#fbfbfb;border:0.7px solid #b4b4b4;box-sizing:border-box"></div>
<svg style="left:473.90px;top:299.70px" width="4.8" height="5.6" viewBox="0 0 4.8 5.6"><path d="M2.4 0.2L4.4 2.6H3V4H1.8V2.6H0.4z" fill="#333"/><path d="M0.4 5h4" stroke="#333" stroke-width="0.7"/></svg>
<span style="left:403.40px;top:298.23px;font-size:6.1px;line-height:8.54px;color:#a0a0a0;">(最高值)</span>
<span style="left:203.00px;top:310.93px;font-size:6.1px;line-height:8.54px;color:#444;">颜色(<u>C</u>):</span>
<div style="left:230.50px;top:311.00px;width:79.60px;height:9.50px;background:#fff;border:0.7px solid #c2c2c2;box-sizing:border-box"></div>
<div style="left:300.80px;top:311.90px;width:8.50px;height:7.70px;background:#ececec;border:0.5px solid #cfcfcf;box-sizing:border-box"></div>
<svg style="left:303.10px;top:314.55px" width="4" height="2.6" viewBox="0 0 4 2.6"><path d="M0.4 0.4L2 2 3.6 0.4" fill="none" stroke="#555" stroke-width="0.6"/></svg>
<div style="left:231.50px;top:312.00px;width:68.80px;height:7.50px;background:#ff7530"></div>
<div style="left:401.20px;top:311.00px;width:80.20px;height:9.50px;background:#fff;border:0.7px solid #c2c2c2;box-sizing:border-box"></div>
<div style="left:472.10px;top:311.90px;width:8.50px;height:7.70px;background:#ececec;border:0.5px solid #cfcfcf;box-sizing:border-box"></div>
<svg style="left:474.40px;top:314.55px" width="4" height="2.6" viewBox="0 0 4 2.6"><path d="M0.4 0.4L2 2 3.6 0.4" fill="none" stroke="#555" stroke-width="0.6"/></svg>
<div style="left:402.20px;top:312.00px;width:69.40px;height:7.50px;background:#ffe48a"></div>
<span style="left:203.00px;top:325.93px;font-size:6.1px;line-height:8.54px;color:#222;font-weight:bold">预览:</span>
<div style="left:218.80px;top:324.40px;width:263.20px;height:11.80px;background:linear-gradient(90deg,#fd7124,#ffe88e);border:0.7px solid #857a6a;box-sizing:border-box"></div>
<div style="left:403.00px;top:343.40px;width:37.00px;height:12.60px;background:#e2e2e2;border:0.7px solid #b6b6b6;box-sizing:border-box"></div>
<span style="left:321.50px;width:200px;text-align:center;top:344.03px;font-size:6.1px;line-height:8.54px;color:#333;">确定</span>
<div style="left:446.30px;top:343.40px;width:37.00px;height:12.60px;background:#e2e2e2;border:0.7px solid #b6b6b6;box-sizing:border-box"></div>
<span style="left:364.80px;width:200px;text-align:center;top:344.03px;font-size:6.1px;line-height:8.54px;color:#333;">取消</span>
</div></div></body></html>
